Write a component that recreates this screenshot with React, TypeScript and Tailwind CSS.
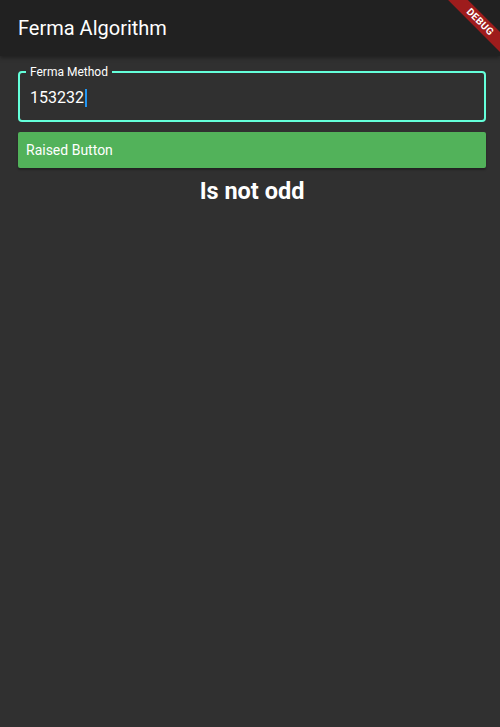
import React from "react";

export default function App() {
  return (
    <div
      className="relative w-[500px] h-[727px] overflow-hidden bg-[#303030] flex flex-col"
      style={{ fontFamily: "Roboto, 'Liberation Sans', sans-serif" }}
    >
      <header className="h-[56px] bg-[#212121] flex items-center px-[18px] shadow-[0_2px_4px_rgba(0,0,0,0.35)] z-10 shrink-0">
        <h1 className="text-white text-[20px] font-normal leading-none">Ferma Algorithm</h1>
      </header>
      <main className="flex-1 flex flex-col pl-[18px] pr-[14px] pt-[15px]">
        <div className="relative h-[51px] rounded-[4px] border-2 border-[#64ffda] flex items-center px-[10px] pt-[2px]">
          <span className="absolute -top-[8px] left-[6px] px-[4px] bg-[#303030] text-white text-[12px] leading-[14px]">
            Ferma Method
          </span>
          <span className="text-white text-[16px] leading-none">153232</span>
          <span className="inline-block w-[2px] h-[18px] bg-[#2196f3] ml-[1px]" />
        </div>
        <button className="mt-[10px] h-[36px] bg-[#52b25a] rounded-[2px] flex items-center px-[8px] text-white text-[14px] shadow-[0_2px_2px_rgba(0,0,0,0.3)]">
          Raised Button
        </button>
        <p className="text-center text-white text-[23.5px] font-bold leading-none mt-[12px]">Is not odd</p>
      </main>
      <div className="absolute z-20 top-[15px] right-[-38px] w-[116px] h-[14px] bg-[#9e1c1c] rotate-45 flex items-center justify-center">
        <span className="text-white text-[10px] font-bold leading-none tracking-[0.3px]">DEBUG</span>
      </div>
    </div>
  );
}
